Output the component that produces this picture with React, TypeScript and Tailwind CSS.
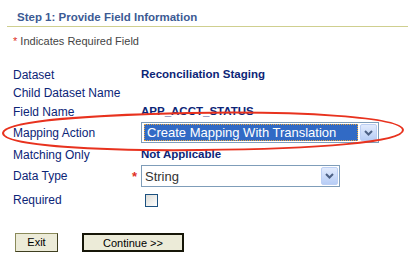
import React from "react";

const navy = "text-[#0c2577]";

function Chevron() {
  return (
    <svg width="9" height="6" viewBox="0 0 9 6">
      <path d="M1 1 L4.5 4.5 L8 1" fill="none" stroke="#4d6185" strokeWidth="2" />
    </svg>
  );
}

function ArrowButton() {
  return (
    <div className="flex h-full w-[17px] items-center justify-center rounded-[2px] border border-[#bccff4] bg-gradient-to-b from-[#e2ebfd] to-[#b7cdf6]">
      <Chevron />
    </div>
  );
}

function Row({
  label,
  h,
  req,
  children,
}: {
  label: string;
  h: string;
  req?: boolean;
  children?: React.ReactNode;
}) {
  return (
    <div className={`flex items-center ${h}`}>
      <div className={`flex w-[141px] items-center justify-between pl-[13px] pr-[4px] text-[12px] ${navy}`}>
        <span>{label}</span>
        {req && <span className="text-[13px] font-bold leading-none text-[#e0301e]">*</span>}
      </div>
      {children}
    </div>
  );
}

export default function App() {
  return (
    <div className="relative h-[274px] w-[408px] overflow-hidden bg-white font-['Liberation_Sans',Arial,sans-serif]">
      <div className="ml-[7px] h-[27px] border-b border-[#cfcf8f] pl-[10px] pt-[11px] text-[11.5px] font-bold leading-[13px] text-[#3c5a94]">
        Step 1: Provide Field Information
      </div>
      <div className="mt-[7px] h-[14px] pl-[13px] text-[11px] leading-[14px] text-[#444]">
        <span className="text-[#e0301e]">*</span> Indicates Required Field
      </div>

      <div className="mt-[18px] flex flex-col">
        <Row label="Dataset" h="h-[18px]">
          <span className={`text-[11.5px] font-bold ${navy}`}>Reconciliation Staging</span>
        </Row>
        <Row label="Child Dataset Name" h="h-[18px]" />
        <Row label="Field Name" h="h-[19px]">
          <span className={`text-[11.5px] font-bold ${navy}`}>APP_ACCT_STATUS</span>
        </Row>
        <div className="mt-[1px]">
          <Row label="Mapping Action" h="h-[21px]">
            <div className="flex h-[21px] w-[238px] items-center border border-[#7f9db9] bg-white py-[1px] pl-[2px] pr-[1px]">
              <div className="flex h-full flex-1 items-center border border-dotted border-[#e9a63c] bg-[#316ac5] pl-[2px] text-[13px] leading-none text-white">
                Create Mapping With Translation
              </div>
              <div className="ml-[2px] h-full">
                <ArrowButton />
              </div>
            </div>
          </Row>
        </div>
        <div className="mt-[3px]">
          <Row label="Matching Only" h="h-[18px]">
            <span className={`text-[11.5px] font-bold ${navy}`}>Not Applicable</span>
          </Row>
        </div>
        <div className="mt-[1px]">
          <Row label="Data Type" h="h-[22px]" req>
            <div className="flex h-[22px] w-[199px] items-center border border-[#7f9db9] bg-white py-[1px] pl-[3px] pr-[1px]">
              <div className="flex-1 text-[13px] leading-none text-[#333]">String</div>
              <div className="h-full">
                <ArrowButton />
              </div>
            </div>
          </Row>
        </div>
        <div className="mt-[3px]">
          <Row label="Required" h="h-[20px]">
            <div className="ml-[4px] h-[13px] w-[13px] border border-[#1c5180] bg-gradient-to-br from-[#dcdcd7] to-white" />
          </Row>
        </div>
      </div>

      <div className="mt-[23px] flex gap-[24px] pl-[15px]">
        <button className="h-[19px] w-[43px] border border-[#8a8a5a] border-b-[#3f3f20] border-r-[#3f3f20] bg-[#ecebd8] text-[11px] text-black">
          Exit
        </button>
        <button className="h-[19px] w-[102px] border-2 border-[#161608] bg-[#ecebd8] text-[11px] text-black">
          Continue &gt;&gt;
        </button>
      </div>

      <svg className="pointer-events-none absolute inset-0" width="408" height="274" viewBox="0 0 408 274">
        <path
          d="M3 133 C 4 121, 90 115, 190 113 C 300 111, 402 117, 403 130 C 403 142, 320 149, 200 150 C 100 151, 3 146, 3 133 Z"
          fill="none"
          stroke="#e8321e"
          strokeWidth="2"
        />
      </svg>
    </div>
  );
}
